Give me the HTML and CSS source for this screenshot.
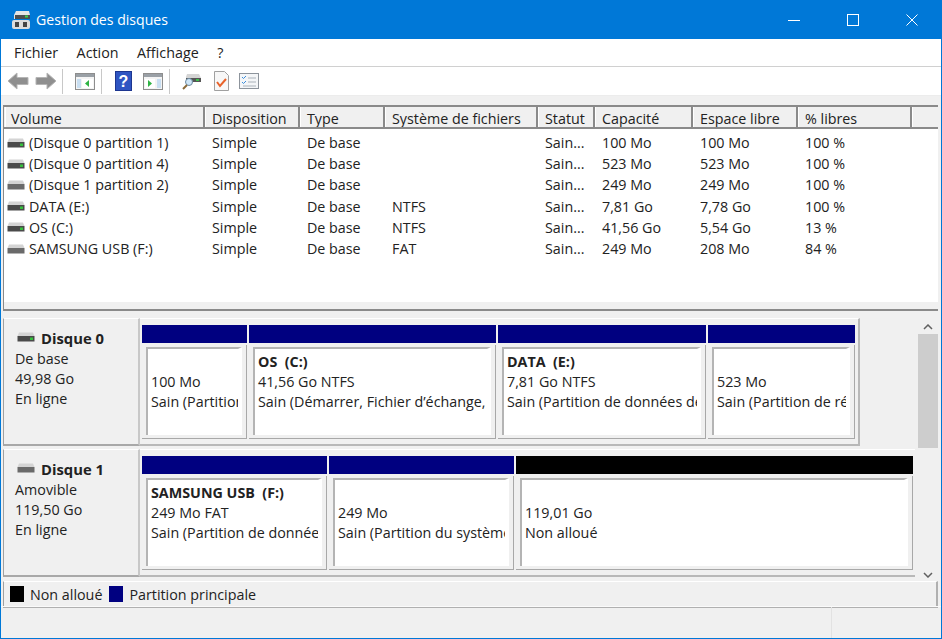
FILE: index.html
```html
<!DOCTYPE html>
<html lang="fr">
<head>
<meta charset="utf-8">
<title>Gestion des disques</title>
<link rel="stylesheet" href="styles.css">
</head>
<body>
<svg class="defs" width="0" height="0">
  <symbol id="disk" viewBox="0 0 18 12">
    <path d="M2 1.500h14l1.500 3.500H.5z" fill="#d4d4d4"/>
    <rect x=".5" y="5" width="17" height="5.500" fill="#4a4a4a"/>
    <rect x="13" y="6.500" width="3" height="2.500" fill="#35c13c"/>
  </symbol>
  <symbol id="diskg" viewBox="0 0 18 12">
    <path d="M2 1.500h14l1.500 3.500H.5z" fill="#d4d4d4"/>
    <rect x=".5" y="5" width="17" height="5.500" fill="#6a6a6a"/>
  </symbol>
</svg>
<div class="window">
  <header class="titlebar">
    <svg class="appicon" width="20" height="20" viewBox="0 0 20 20">
      <path d="M5 1h13l1 4v4H3V5z" fill="#e4e4e4"/>
      <rect x="4" y="5" width="15" height="4" fill="#4d4d4d"/>
      <rect x="14" y="5.500" width="3" height="2" fill="#3fd04a"/>
      <rect x="1" y="10" width="18" height="9" rx="2" fill="#dcdcdc"/>
      <rect x="4" y="12" width="4" height="5" fill="#444"/>
      <rect x="12" y="12" width="4" height="5" fill="#444"/>
    </svg>
    <span class="title">Gestion des disques</span>
    <div class="winbtns">
      <svg width="12" height="12" viewBox="0 0 12 12"><path d="M0 6.500h12" stroke="#fff" fill="none"/></svg>
      <svg width="12" height="12" viewBox="0 0 12 12"><rect x=".5" y=".5" width="11" height="11" stroke="#fff" fill="none"/></svg>
      <svg width="12" height="12" viewBox="0 0 12 12"><path d="M.5.500l11 11M11.500.500l-11 11" stroke="#fff" fill="none"/></svg>
    </div>
  </header>
  <nav class="menubar">
    <span>Fichier</span><span>Action</span><span>Affichage</span><span>?</span>
  </nav>
  <div class="toolbar">
    <svg class="tb tb-back" width="22" height="20" viewBox="0 0 22 20"><path d="M1 10l9-8v4.500h11v7H10V18z" fill="#8f8f8f" stroke="#b5b5b5"/></svg>
    <svg class="tb tb-fwd" width="22" height="20" viewBox="0 0 22 20"><path d="M21 10l-9-8v4.500H1v7h11V18z" fill="#8f8f8f" stroke="#b5b5b5"/></svg>
    <i class="sep sep-a"></i>
    <svg class="tb tb-p1" width="20" height="17" viewBox="0 0 20 17"><rect x=".5" y=".5" width="19" height="16" fill="#f4f4f4" stroke="#8d8d8d"/><rect x="1" y="1" width="18" height="3" fill="#9aa0a6"/><rect x="2" y="6" width="4" height="9" fill="#c9dff2"/><rect x="7" y="6" width="11" height="9" fill="#fff"/><path d="M14 7v7l-4-3.500z" fill="#2fb344"/></svg>
    <i class="sep sep-b"></i>
    <svg class="tb tb-help" width="17" height="20" viewBox="0 0 17 20"><rect width="17" height="20" fill="#2f55c2"/><rect x=".5" y=".5" width="16" height="19" fill="none" stroke="#1d3690"/><text x="8.500" y="16" text-anchor="middle" class="helpq">?</text></svg>
    <svg class="tb tb-p2" width="20" height="17" viewBox="0 0 20 17"><rect x=".5" y=".5" width="19" height="16" fill="#f4f4f4" stroke="#8d8d8d"/><rect x="1" y="1" width="18" height="3" fill="#9aa0a6"/><rect x="2" y="6" width="10" height="9" fill="#fff"/><rect x="14" y="6" width="4" height="9" fill="#c9dff2"/><path d="M5 7v7l4-3.500z" fill="#2fb344"/></svg>
    <i class="sep sep-c"></i>
    <svg class="tb tb-s" width="20" height="20" viewBox="0 0 20 20"><path d="M5 3h12l2 4v4H4V6z" fill="#d4d4d4"/><rect x="4" y="7" width="15" height="4" fill="#555"/><rect x="14" y="8" width="3" height="2" fill="#3cc04a"/><circle cx="7" cy="11" r="3.500" fill="#cfe6f7" stroke="#6d8aa0"/><path d="M5 14l-4 4" stroke="#8a6a3a" stroke-width="2"/></svg>
    <svg class="tb tb-c" width="15" height="20" viewBox="0 0 15 20"><path d="M.5.500h10l4 4v15H.500z" fill="#f7f7f7" stroke="#a0a0a0"/><path d="M3 11l3 4 6-7" stroke="#e8622a" stroke-width="2" fill="none"/></svg>
    <svg class="tb tb-l" width="20" height="16" viewBox="0 0 20 16"><rect x=".5" y=".5" width="19" height="15" fill="#f4f6f8" stroke="#8d949c"/><path d="M3 4l1.500 1.500L7 3M3 9l1.500 1.500L7 8" stroke="#3a8ddb" fill="none"/><path d="M9 5h8M9 9h8M4 13h13" stroke="#aab2ba"/></svg>
  </div>
  <main class="content">
    <section class="listview">
      <div class="vrow vhead">
        <div>Volume</div><div>Disposition</div><div>Type</div><div>Système de fichiers</div><div>Statut</div><div>Capacité</div><div>Espace libre</div><div>% libres</div><div></div>
      </div>
      <div class="vbody">
        <div class="vrow"><div class="vname"><svg width="18" height="12"><use href="#disk"/></svg>(Disque 0 partition 1)</div><div>Simple</div><div>De base</div><div></div><div>Sain...</div><div>100 Mo</div><div>100 Mo</div><div>100 %</div><div></div></div>
        <div class="vrow"><div class="vname"><svg width="18" height="12"><use href="#disk"/></svg>(Disque 0 partition 4)</div><div>Simple</div><div>De base</div><div></div><div>Sain...</div><div>523 Mo</div><div>523 Mo</div><div>100 %</div><div></div></div>
        <div class="vrow"><div class="vname"><svg width="18" height="12"><use href="#diskg"/></svg>(Disque 1 partition 2)</div><div>Simple</div><div>De base</div><div></div><div>Sain...</div><div>249 Mo</div><div>249 Mo</div><div>100 %</div><div></div></div>
        <div class="vrow"><div class="vname"><svg width="18" height="12"><use href="#disk"/></svg>DATA (E:)</div><div>Simple</div><div>De base</div><div>NTFS</div><div>Sain...</div><div>7,81 Go</div><div>7,78 Go</div><div>100 %</div><div></div></div>
        <div class="vrow"><div class="vname"><svg width="18" height="12"><use href="#disk"/></svg>OS (C:)</div><div>Simple</div><div>De base</div><div>NTFS</div><div>Sain...</div><div>41,56 Go</div><div>5,54 Go</div><div>13 %</div><div></div></div>
        <div class="vrow"><div class="vname"><svg width="18" height="12"><use href="#diskg"/></svg>SAMSUNG USB (F:)</div><div>Simple</div><div>De base</div><div>FAT</div><div>Sain...</div><div>249 Mo</div><div>208 Mo</div><div>84 %</div><div></div></div>
      </div>
      <div class="hscroll"></div>
    </section>
    <section class="graph">
      <div class="disks">
        <div class="disk disk0">
          <div class="dinfo">
            <div class="dname"><svg width="18" height="12"><use href="#disk"/></svg><b>Disque 0</b></div>
            <div>De base</div><div>49,98 Go</div><div>En ligne</div>
          </div>
          <div class="parts">
            <div class="part w105"><div class="bar"></div><div class="pbody"><div class="pin"><div class="pb">&nbsp;</div><div>100 Mo</div><div>Sain (Partition de récupération)</div></div></div></div>
            <div class="part w247"><div class="bar"></div><div class="pbody"><div class="pin"><div class="pb">OS&nbsp; (C:)</div><div>41,56 Go NTFS</div><div>Sain (Démarrer, Fichier d’échange, Vidage sur incident)</div></div></div></div>
            <div class="part w208"><div class="bar"></div><div class="pbody"><div class="pin"><div class="pb">DATA&nbsp; (E:)</div><div>7,81 Go NTFS</div><div>Sain (Partition de données de base)</div></div></div></div>
            <div class="part w147"><div class="bar"></div><div class="pbody"><div class="pin"><div class="pb">&nbsp;</div><div>523 Mo</div><div>Sain (Partition de récupération)</div></div></div></div>
          </div>
        </div>
        <div class="disk disk1">
          <div class="dinfo">
            <div class="dname"><svg width="18" height="12"><use href="#diskg"/></svg><b>Disque 1</b></div>
            <div>Amovible</div><div>119,50 Go</div><div>En ligne</div>
          </div>
          <div class="parts">
            <div class="part w185"><div class="bar"></div><div class="pbody"><div class="pin"><div class="pb">SAMSUNG USB&nbsp; (F:)</div><div>249 Mo FAT</div><div>Sain (Partition de données de base)</div></div></div></div>
            <div class="part w185"><div class="bar"></div><div class="pbody"><div class="pin"><div class="pb">&nbsp;</div><div>249 Mo</div><div>Sain (Partition du système EFI)</div></div></div></div>
            <div class="part w397"><div class="bar black"></div><div class="pbody"><div class="pin"><div class="pb">&nbsp;</div><div>119,01 Go</div><div>Non alloué</div></div></div></div>
          </div>
        </div>
      </div>
      <div class="vscroll">
        <svg width="10" height="6" viewBox="0 0 10 6"><path d="M1 5l4-4 4 4" stroke="#606060" stroke-width="1.500" fill="none"/></svg>
        <div class="thumb"></div>
        <svg class="down" width="10" height="6" viewBox="0 0 10 6"><path d="M1 1l4 4 4-4" stroke="#606060" stroke-width="1.500" fill="none"/></svg>
      </div>
    </section>
    <footer class="legend">
      <i class="sw black"></i><span>Non alloué</span><i class="sw navy"></i><span>Partition principale</span>
    </footer>
  </main>
  <div class="status"><div></div><div></div></div>
</div>
</body>
</html>
```

FILE: styles.css
```css
* { box-sizing: border-box; }
html, body { margin: 0; height: 100%; }
body { font-family: "Open Sans", "Noto Sans", sans-serif; font-size: 14.300px; color: #222; background: #f0f0f0; overflow: hidden; }
.defs { position: absolute; }
.window { width: 942px; height: 639px; display: flex; flex-direction: column; border: 1px solid #0078d7; border-top: 0; background: #f0f0f0; }
.titlebar { height: 39px; margin: 0 -1px; background: #0078d7; color: #fff; display: flex; align-items: center; padding-left: 11px; flex: none; }
.appicon { margin-right: 5px; }
.title { font-size: 14.100px; flex: 1; }
.winbtns { display: flex; gap: 47px; padding-right: 24px; }
.menubar { height: 28px; background: #fff; display: flex; align-items: center; padding-left: 13px; gap: 18.500px; border-bottom: 1px solid #d0d0d0; flex: none; }
.toolbar { height: 29px; background: #fff; display: flex; align-items: center; padding-left: 6px; flex: none; border-bottom: 1px solid #ececec; }
.tb { display: block; flex: none; }
.tb-fwd { margin-left: 6px; }
.sep { width: 1px; height: 25px; background: #c8c8c8; flex: none; }
.sep-a { margin: 0 12px 0 5px; }
.sep-b { margin: 0 13px 0 6px; }
.tb-p2 { margin-left: 11px; }
.sep-c { margin: 0 12px 0 6px; }
.tb-c { margin-left: 12px; }
.tb-l { margin-left: 10px; }
.helpq { font: bold 16px "Liberation Sans", sans-serif; fill: #fff; }
.content { flex: 1; display: flex; flex-direction: column; padding: 9px 3px 0 2px; min-height: 0; }
.listview { height: 206px; background: #fff; border-left: 1px solid #8a8a8a; display: flex; flex-direction: column; flex: none; }
.vrow { display: grid; grid-template-columns: 200px 95px 85px 153px 57px 98px 105px 114px 26px; height: 21.200px; line-height: 21px; }
.vrow > div { padding-left: 8px; white-space: nowrap; overflow: hidden; }
.vhead { height: 24px; line-height: 24px; background: #f0f0f0; border-top: 2px solid #8a8a8a; border-bottom: 2px solid #8a8a8a; margin-bottom: 3px; padding-left: 1px; flex: none; }
.vrow.vhead > div { padding-left: 6px; border-right: 2px solid #8a8a8a; border-left: 1px solid #fff; }
.vrow.vhead > div:first-child { padding-left: 5px; }
.vrow.vhead > div:last-child { border-right: 0; }
.vbody { flex: 1; }
.vrow > .vname { padding-left: 3px; display: flex; align-items: center; gap: 4px; }
.hscroll { height: 9px; background: #f0f0f0; border-bottom: 2px solid #8a8a8a; flex: none; }
.graph { display: flex; height: 270px; flex: none; padding-top: 7px; }
.disks { width: 913px; flex: none; }
.disk { display: flex; height: 131px; align-items: flex-start; }
.disk0 { width: 857px; }
.disk1 { width: 912px; }
.dinfo { width: 137px; height: 128px; flex: none; padding: 10px 0 0 11px; line-height: 20px; background: #f0f0f0; border-top: 1px solid #fff; border-right: 2px solid #c8c8c8; border-bottom: 2px solid #a8a8a8; border-left: 1px solid #a0a0a0; }
.dname { display: flex; align-items: center; gap: 6px; padding-left: 2px; font-size: 14.800px; height: 18px; margin-bottom: 2px; }
.dname svg { margin-top: -3px; }
.dname b { font-weight: 700; }
.parts { flex: 1; display: flex; gap: 2px; padding: 6px 0 5px 2px; height: 128px; border-right: 2px solid #b8b8b8; border-bottom: 2px solid #b8b8b8; border-top: 1px solid #fff; }
.disk1 .parts { border-right: 0; }
.part { display: flex; flex-direction: column; flex: none; }
.w105 { width: 105px; }
.w247 { width: 247px; }
.w208 { width: 208px; }
.w147 { width: 147px; }
.w185 { width: 185px; }
.w397 { width: 397px; }
.bar { height: 18px; background: #000080; flex: none; }
.bar.black { background: #000; }
.pbody { flex: 1; margin-top: 2px; padding: 2px 4px 3px 4px; background: #f0f0f0; border-right: 1px solid #a8a8a8; border-bottom: 1px solid #a8a8a8; }
.pin { height: 100%; background: #fff; border-top: 2px solid #b4b4b4; border-left: 2px solid #b4b4b4; border-right: 4px solid #fff; padding: 3px 0 0 3px; line-height: 20px; overflow: hidden; white-space: nowrap; }
.pb { font-weight: 700; }
.vscroll { width: 20px; margin-left: 2px; margin-top: 1px; display: flex; flex-direction: column; align-items: center; padding-top: 5px; height: 261px; }
.thumb { align-self: stretch; height: 114px; margin-top: 4px; background: #cdcdcd; }
.down { margin-top: auto; margin-bottom: 2px; }
.legend { height: 27px; display: flex; align-items: center; padding-left: 6px; background: #f0f0f0; border: 1px solid #fff; border-left-color: #a0a0a0; border-bottom: 2px solid #b0b0b0; border-right: 2px solid #b0b0b0; flex: none; }
.sw { width: 14px; height: 16px; margin-right: 6px; flex: none; }
.sw.black { background: #000; }
.sw.navy { background: #000080; margin-left: 7px; }
.status { height: 32px; display: grid; grid-template-columns: 831px 1fr; border-top: 1px solid #fafafa; flex: none; }
.status > div:first-child { border-right: 1px solid #e2e2e2; }
```
